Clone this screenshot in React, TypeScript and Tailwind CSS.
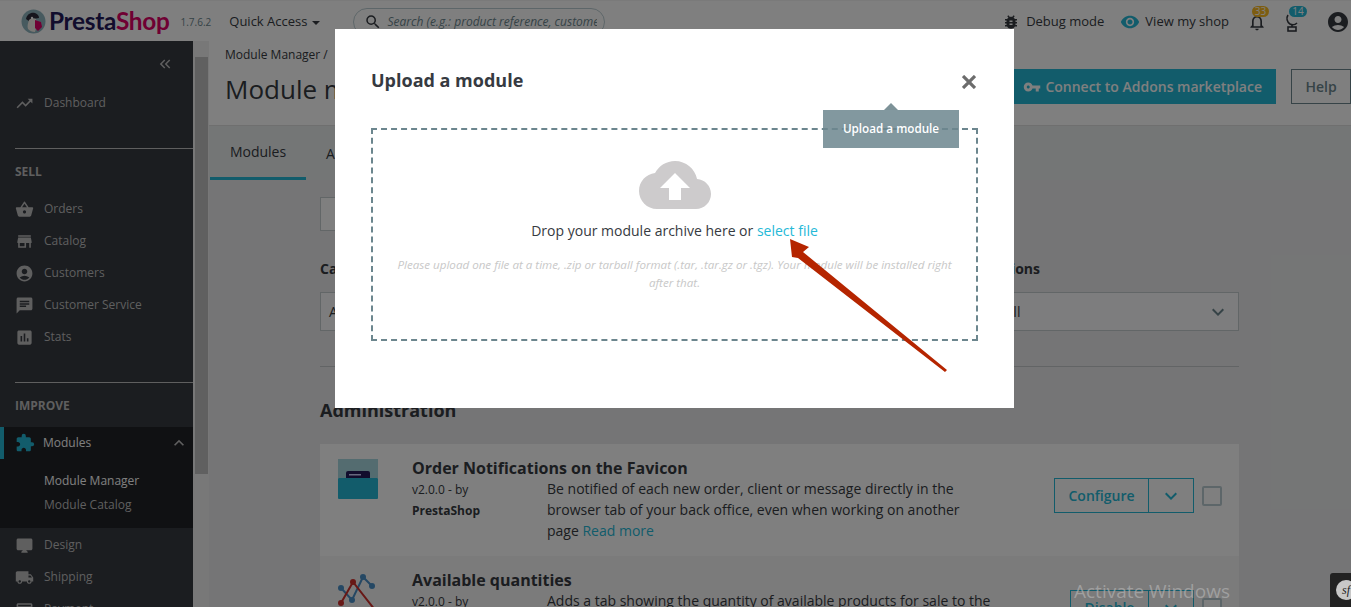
import type { ReactNode } from "react";
import {
  MdAccountCircle,
  MdAssessment,
  MdBugReport,
  MdChat,
  MdDesktopMac,
  MdExtension,
  MdKeyboardArrowDown,
  MdKeyboardArrowUp,
  MdKeyboardDoubleArrowLeft,
  MdLocalShipping,
  MdNotificationsNone,
  MdPayment,
  MdSearch,
  MdShoppingBasket,
  MdStore,
  MdTrendingUp,
  MdVisibility,
  MdVpnKey,
} from "react-icons/md";

// ─── Sidebar ──────────────────────────────────────────────────────────────────

function NavItem({ icon, label }: { icon: ReactNode; label: string }) {
  return (
    <div className="flex h-8 items-center pl-[15px] pt-[2px] text-[12px] text-[#bebebe]">
      <span className="flex w-[29px] shrink-0 text-[19px] text-[#bebebe]">{icon}</span>
      {label}
    </div>
  );
}

function Sidebar() {
  return (
    <aside className="w-[193px] shrink-0 overflow-hidden bg-[#363a41]">
      <div className="flex h-[45px] items-center justify-end pr-[19px] pt-[1px] text-[18px] text-[#bebebe]">
        <MdKeyboardDoubleArrowLeft />
      </div>
      <NavItem icon={<MdTrendingUp />} label="Dashboard" />
      <div className="ml-[15px] mt-[30px] border-t border-[#bebebe]" />
      <p className="mb-[12px] ml-[15px] mt-[15px] text-[12px] font-bold leading-4 text-[#bebebe]">SELL</p>
      <NavItem icon={<MdShoppingBasket />} label="Orders" />
      <NavItem icon={<MdStore />} label="Catalog" />
      <NavItem icon={<MdAccountCircle />} label="Customers" />
      <NavItem icon={<MdChat />} label="Customer Service" />
      <NavItem icon={<MdAssessment />} label="Stats" />
      <div className="ml-[15px] mt-[30px] border-t border-[#bebebe]" />
      <p className="mb-[13px] ml-[15px] mt-[15px] text-[12px] font-bold leading-4 text-[#bebebe]">IMPROVE</p>
      <div className="bg-[#202226] pb-[11px]">
        <div className="flex h-8 items-center border-l-4 border-[#25b9d7] pl-[11px] text-[12px] text-white">
          <span className="flex w-[28px] shrink-0 text-[20px] text-[#25b9d7]">
            <MdExtension />
          </span>
          Modules
          <MdKeyboardArrowUp className="ml-auto mr-[4px] text-[20px] text-[#bebebe]" />
        </div>
        <p className="mt-[10px] pl-[44px] text-[12px] leading-6 text-white">Module Manager</p>
        <p className="pl-[44px] text-[12px] leading-6 text-[#bebebe]">Module Catalog</p>
      </div>
      <NavItem icon={<MdDesktopMac />} label="Design" />
      <NavItem icon={<MdLocalShipping />} label="Shipping" />
      <NavItem icon={<MdPayment />} label="Payment" />
    </aside>
  );
}

// ─── Header ───────────────────────────────────────────────────────────────────

function Puffin() {
  return (
    <svg width="25" height="25" viewBox="0 0 25 25" className="shrink-0">
      <circle cx="12.5" cy="12.5" r="12" fill="#8fb5bf" />
      <path d="M5 10c1-5 5-7 9-6 3 1 4 3 4 5l-6 1-3 3z" fill="#2c2a3a" />
      <path d="M8 11c2-2 5-2 7-1l1 6-2 7c-3 0-5-1-7-3-1-3 0-6 1-9z" fill="#f3efe8" />
      <path d="M14 11l6 2 1 5-4 4-3-3z" fill="#df0067" />
      <circle cx="11" cy="9" r="1.2" fill="#fff" />
    </svg>
  );
}

function TopBar() {
  return (
    <header className="flex h-[41px] shrink-0 items-center border-t border-[#f4f4f4] bg-white pt-[1px] text-[13px] text-[#363a41]">
      <div className="ml-[21px]">
        <Puffin />
      </div>
      <span className="ml-[3px] font-['Lato',sans-serif] text-[24.4px] font-bold leading-none tracking-[-0.3px] text-[#251b5b]">
        Presta<span className="text-[#df0067]">Shop</span>
      </span>
      <span className="ml-[11px] mt-[2px] text-[10px] text-[#6c868e]">1.7.6.2</span>
      <span className="ml-[18px]">Quick Access</span>
      <span className="ml-[5px] mt-[2px] border-x-[4px] border-t-[4px] border-x-transparent border-t-[#363a41]" />
      <div className="ml-[33px] flex h-[28px] w-[252px] items-center rounded-full border border-[#bbcdd2] pl-[10px]">
        <MdSearch className="shrink-0 text-[18px] text-[#363a41]" />
        <span className="ml-[5px] w-[210px] overflow-hidden whitespace-nowrap text-[12px] italic text-[#6c868e]">
          Search (e.g.: product reference, customer name…)
        </span>
      </div>
      <div className="ml-auto flex items-center">
        <MdBugReport className="text-[18px] text-[#363a41]" />
        <span className="ml-[6px]">Debug mode</span>
        <MdVisibility className="ml-[16px] text-[20px] text-[#25b9d7]" />
        <span className="ml-[5px]">View my shop</span>
        <span className="relative ml-[18px] flex text-[20px] text-[#363a41]">
          <MdNotificationsNone />
          <span className="absolute left-[5px] top-[-6px] flex h-[11px] w-[17px] items-center justify-center rounded-full bg-[#fbbb22] text-[10px] text-white">
            33
          </span>
        </span>
        <span className="relative ml-[16px] flex text-[#363a41]">
          <svg width="18" height="20" viewBox="0 0 18 20" fill="none" stroke="currentColor" strokeWidth="1.6">
            <path d="M5 3c-2 3-1 7 2 9 2 1 5 1 7-1M9 12v3" />
            <rect x="5" y="15" width="8" height="4" />
          </svg>
          <span className="absolute left-[6px] top-[-6px] flex h-[11px] w-[18px] items-center justify-center rounded-full bg-[#25b9d7] text-[10px] text-white">
            14
          </span>
        </span>
        <MdAccountCircle className="ml-[25px] mr-[1px] text-[24px] text-[#363a41]" />
      </div>
    </header>
  );
}

// ─── Module rows ──────────────────────────────────────────────────────────────

function FavIcon() {
  return (
    <svg width="40" height="40" viewBox="0 0 40 40" className="shrink-0">
      <rect width="40" height="19" fill="#a8d8e0" />
      <rect x="8" y="12" width="24" height="9" rx="2" fill="#251b5b" />
      <rect x="11" y="15" width="12" height="1.5" fill="#cfd3ff" />
      <rect y="19" width="40" height="21" rx="1" fill="#25b9d7" />
    </svg>
  );
}

function QtyIcon() {
  return (
    <svg width="40" height="40" viewBox="0 0 40 40" fill="none" strokeWidth="2" className="shrink-0">
      <path d="M3 17l11 12L25 6l9 9" stroke="#4a90c8" />
      <path d="M3 32L15 11l22 28" stroke="#d0312d" />
      <circle cx="25" cy="6" r="3" fill="#4a90c8" />
      <circle cx="34" cy="15" r="3" fill="#4a90c8" />
      <circle cx="3" cy="17" r="3" fill="#4a90c8" />
      <circle cx="14" cy="29" r="3" fill="#4a90c8" />
      <circle cx="15" cy="11" r="3" fill="#d0312d" />
      <circle cx="3" cy="32" r="3" fill="#d0312d" />
    </svg>
  );
}

interface ModuleRowProps {
  icon: ReactNode;
  title: string;
  description: ReactNode;
  action: string;
  actionWidth: string;
  tinted?: boolean;
}

function ModuleRow({ icon, title, description, action, actionWidth, tinted }: ModuleRowProps) {
  return (
    <div className={`flex h-[112px] shrink-0 items-start pl-[18px] pt-[12px] ${tinted ? "bg-[#f6f6f6]" : "bg-white"}`}>
      <div className="mt-[3px] w-[74px] shrink-0">{icon}</div>
      <div className="w-[135px] shrink-0">
        <p className="whitespace-nowrap text-[16px] font-bold leading-[24px] text-[#363a41]">{title}</p>
        <p className="mt-[-1px] text-[12px] leading-[21px] text-[#363a41]">v2.0.0 - by</p>
        <p className="text-[12px] font-bold leading-[21px] text-[#363a41]">PrestaShop</p>
      </div>
      <p className="mt-[22px] w-[446px] shrink-0 text-[14px] leading-[21px] text-[#363a41]">{description}</p>
      <div className="ml-auto mr-[17px] mt-[22px] flex items-center">
        <div className="flex h-[35px] border border-[#25b9d7] text-[14px] font-semibold text-[#25b9d7]">
          <span className={`flex items-center justify-center ${actionWidth}`}>{action}</span>
          <span className="flex w-[45px] items-center justify-center border-l border-[#25b9d7] text-[24px]">
            <MdKeyboardArrowDown />
          </span>
        </div>
        <span className="ml-[8px] h-[20px] w-[20px] rounded-[2px] border-2 border-[#bbcdd2] bg-white" />
      </div>
    </div>
  );
}

// ─── Page body ────────────────────────────────────────────────────────────────

function Main() {
  return (
    <main className="flex min-w-0 flex-1 flex-col">
      <div className="flex h-[85px] shrink-0 border-b border-[#dfdfdf] bg-white pl-[16px]">
        <div className="pt-[5px]">
          <p className="text-[12px] leading-[18px] text-[#363a41]">Module Manager /</p>
          <h1 className="mt-[7px] text-[26px] leading-[36px] text-[#363a41]">Module manager</h1>
        </div>
        <div className="ml-auto mt-[28px] flex h-[35px] items-center">
          <span className="flex h-full items-center gap-[4px] bg-[#25b9d7] px-[14px] text-[14px] font-semibold text-white">
            <MdVpnKey className="text-[18px]" />
            Connect to Addons marketplace
          </span>
          <span className="ml-[15px] flex h-full w-[60px] items-center justify-center border border-[#6c868e] text-[14px] font-semibold text-[#6c868e]">
            Help
          </span>
        </div>
      </div>
      <div className="flex h-[54px] shrink-0 items-stretch bg-[#e8eced] pl-[1px] text-[14px] text-[#363a41]">
        <span className="flex w-[96px] items-center justify-center border-b-[3px] border-[#25b9d7]">Modules</span>
        <span className="ml-[20px] flex items-center">Alerts</span>
      </div>
      <div className="flex-1 overflow-hidden bg-[#eaebec] pl-[111px] pr-[112px] pt-[17px]">
        <div className="flex h-[34px] w-[400px] items-center border border-[#c4cccf] bg-white pl-[18px] text-[14px] text-[#6c868e]">
          Search modules
        </div>
        <div className="mt-[28px] flex gap-[16px] text-[14px] text-[#363a41]">
          <div className="flex-1">
            <p className="font-bold leading-[20px]">Category</p>
            <div className="mt-[13px] flex h-[39px] items-center border border-[#c4cccf] bg-[#fafbfc] px-[8px]">All categories</div>
          </div>
          <div className="w-[285px] shrink-0">
            <p className="font-bold leading-[20px]">Bulk actions</p>
            <div className="mt-[13px] flex h-[39px] items-center justify-between border border-[#c4cccf] bg-[#fafbfc] pl-[8px] pr-[8px]">
              Uninstall
              <MdKeyboardArrowDown className="text-[24px] text-[#6c868e]" />
            </div>
          </div>
        </div>
        <div className="mt-[35px] border-t border-[#c4c8ca]" />
        <h2 className="mt-[31px] text-[18px] font-bold leading-[24px] text-[#363a41]">Administration</h2>
        <div className="mt-[22px]">
          <ModuleRow
            icon={<FavIcon />}
            title="Order Notifications on the Favicon"
            action="Configure"
            actionWidth="w-[93px]"
            description={
              <>
                Be notified of each new order, client or message directly in the browser tab of your back office, even
                when working on another page <span className="text-[#25b9d7]">Read more</span>
              </>
            }
          />
          <ModuleRow
            tinted
            icon={<QtyIcon />}
            title="Available quantities"
            action="Disable"
            actionWidth="w-[77px]"
            description="Adds a tab showing the quantity of available products for sale to the"
          />
        </div>
      </div>
    </main>
  );
}

// ─── Upload modal ─────────────────────────────────────────────────────────────

function UploadModal() {
  return (
    <div className="absolute inset-0 flex items-start justify-center bg-black/50 pr-[2px] pt-[29px]">
      <div className="relative h-[379px] w-[679px] bg-white pl-[36px] pr-[36px] pt-[38px]">
        <div className="flex items-center justify-between">
          <h3 className="text-[18px] font-bold leading-[27px] text-[#363a41]">Upload a module</h3>
          <svg width="14" height="14" viewBox="0 0 14 14" stroke="#6c6c6c" strokeWidth="3.2" className="mr-[2px] mt-[3px]">
            <path d="M1 1l12 12M13 1L1 13" />
          </svg>
        </div>
        <div className="mt-[34px] flex h-[213px] flex-col items-center border-2 border-dashed border-[#6c868e] pt-[31px]">
          <svg width="72" height="48" viewBox="0 4 24 16" fill="#cdcbcc">
            <path d="M19.35 10.04C18.67 6.59 15.64 4 12 4 9.11 4 6.6 5.64 5.35 8.04 2.34 8.36 0 10.91 0 14c0 3.31 2.69 6 6 6h13c2.76 0 5-2.24 5-5 0-2.64-2.05-4.78-4.65-4.96zM14 13v4h-4v-4H7l5-5 5 5h-3z" />
          </svg>
          <p className="mt-[11px] text-[14px] leading-[21px] text-[#363a41]">
            Drop your module archive here or <span className="text-[#25b9d7]">select file</span>
          </p>
          <p className="mt-[15px] w-[570px] text-center text-[11.6px] italic leading-[18px] text-[#c8c8c8]">
            Please upload one file at a time, .zip or tarball format (.tar, .tar.gz or .tgz). Your module will be
            installed right after that.
          </p>
        </div>
        <div className="absolute left-[488px] top-[81px] flex h-[38px] w-[136px] items-center justify-center bg-[#6c868e]/85 text-[11.7px] font-semibold text-white">
          <span className="absolute left-[61px] top-[-7px] h-0 w-0 border-x-[7px] border-b-[7px] border-x-transparent border-b-[#7d9298]" />
          Upload a module
        </div>
      </div>
      <svg width="1351" height="607" viewBox="0 0 1351 607" className="absolute left-0 top-0">
        <path d="M790 239L809 247L803 252L947 370L945 372L798 258L792 257Z" fill="#b52500" />
      </svg>
      <span className="absolute left-[1074px] top-[578px] text-[19px] leading-[27px] text-[#b0b0b0]/70">
        Activate Windows
      </span>
      <div className="absolute bottom-0 right-0 flex h-[34px] w-[21px] items-center overflow-hidden rounded-tl-[3px] bg-[#222] pl-[6px]">
        <span className="flex h-[20px] w-[20px] shrink-0 items-center justify-center rounded-full bg-[#c8c8c8] font-['Liberation_Serif',serif] text-[12px] italic text-[#222]">
          sf
        </span>
      </div>
    </div>
  );
}

export default function App() {
  return (
    <div className="relative flex h-screen flex-col overflow-hidden bg-[#eaebec] font-['Open_Sans',sans-serif]">
      <TopBar />
      <div className="flex min-h-0 flex-1">
        <Sidebar />
        <div className="w-[16px] shrink-0 bg-[#f1f1f1] pl-[2px] pr-[1px] pt-[16px]">
          <div className="h-[417px] bg-[#c1c1c1]" />
        </div>
        <Main />
      </div>
      <UploadModal />
    </div>
  );
}
